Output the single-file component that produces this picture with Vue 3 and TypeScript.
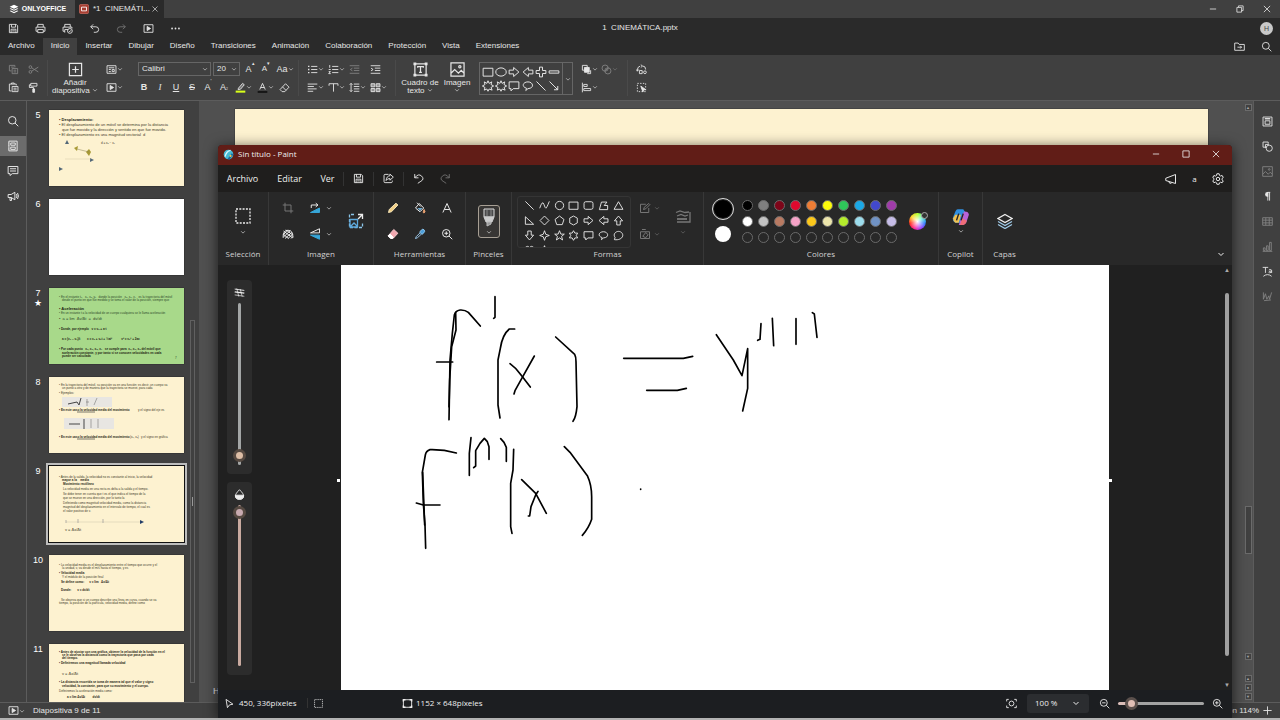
<script setup lang="ts">
import { h, ref } from 'vue'

const icons: Record<string, string> = {
  logo: '<g fill="currentColor" stroke="none"><path d="M8 1l7 3.2-7 3.2-7-3.2z"/><path d="M1 7.6l2-.9 5 2.3 5-2.3 2 .9-7 3.2z"/><path d="M1 11.2l2-.9 5 2.3 5-2.3 2 .9L8 14.6z"/></g>',
  slides: '<rect x="1" y="1" width="14" height="14" rx="1" fill="#a33a2e" stroke="#d06b5f"/><path d="M4 5h8v6H4z" stroke="#fff" stroke-width="1.4"/>',
  close: '<path d="M3 3l10 10M13 3L3 13"/>',
  min: '<path d="M3 8h10"/>',
  restore: '<path d="M3 5.5h7.500v7.500H3zM5.500 5V3H13v7.500h-2.500"/>',
  max: '<path d="M3 3h10v10H3z"/>',
  save: '<path d="M2 2h10l2 2v10H2zM5 2v4h6V2M4.500 14V9h7v5M6 11.500h4"/>',
  print: '<path d="M4 6V2h8v4M4 12H1.500V6h13v6H12M4 9.500h8V14H4z"/>',
  printq: '<path d="M4 6V2h8v4M4 12H1.500V6h13v2M4 14V9.500h5"/><circle cx="11.500" cy="11.500" r="3.500"/><path d="M10 11.500l1.200 1.200 2-2.200"/>',
  undo: '<path d="M6 2L2.500 5.500 6 9M2.500 5.500H10a4 4 0 010 8H7"/>',
  redo: '<path d="M10 2l3.500 3.500L10 9M13.500 5.500H6a4 4 0 000 8h3"/>',
  play: '<path d="M1.500 2.500h13v11h-13z"/><path d="M6 5l5 3-5 3z" fill="currentColor"/>',
  dots: '<g fill="currentColor" stroke="none"><circle cx="3" cy="8" r="1.300"/><circle cx="8" cy="8" r="1.300"/><circle cx="13" cy="8" r="1.300"/></g>',
  folder: '<path d="M1 3h5l1.500 2H15v8.500H1zM5 9h6M9 7l2 2-2 2"/>',
  search: '<circle cx="7" cy="7" r="5"/><path d="M10.700 10.700L15 15"/>',
  copy: '<path d="M10 5V2H2v8h3M4.500 4.500h4M6 6.500h8V14H6zM8 9h4M8 11.500h4"/>',
  cut: '<circle cx="3.500" cy="4.500" r="2"/><circle cx="3.500" cy="11.500" r="2"/><path d="M5.200 5.500L15 11.500M5.200 10.500L15 4.500"/>',
  paste: '<path d="M5 13H2V3h10v2M5 3V1.500h4V3M6 6.500h8.500V14H6zM8 9h4.500M8 11.500h4.500"/>',
  brush: '<path d="M4 2h9v4H4zM4 4H2v4h6v2"/><path d="M7 10h2.500v5H7z" fill="currentColor"/>',
  addslide: '<path d="M1.500 1.500h13v13h-13zM8 4.500v7M4.500 8h7"/>',
  layout: '<path d="M1.500 2.500h13v11h-13zM4 5.500h8M4 8h3M9 8h3v3H9zM4 11h3"/>',
  eraser: '<path d="M9.500 2.500l5 5-6 6.500h-4L1.500 11zM5 7l5 5"/>',
  bullets: '<path d="M6 3.500h9M6 8h9M6 12.500h9"/><path d="M1.500 3.500h2M1.500 8h2M1.500 12.500h2" stroke-width="2"/>',
  numbers: '<path d="M6 3.500h9M6 8h9M6 12.500h9M2.500 1.500v4M1 8h3M1 11h2.500l-2.500 3h3"/>',
  outdent: '<path d="M1 2.500h14M7 6h8M7 9.500h8M1 13.500h14M5 6L2 8l3 2"/>',
  indent: '<path d="M1 2.500h14M7 6h8M7 9.500h8M1 13.500h14M1.500 6l3 2-3 2"/>',
  alignl: '<path d="M1 3h14M1 6.500h9M1 10h13M1 13.500h8"/>',
  valign: '<path d="M1.500 5.500V2.500h13v3M8 2.500V14"/>',
  spacing: '<path d="M7 3h8M7 6.500h8M7 10h8M7 13.500h8M3 2v12M1 4l2-2 2 2M1 12l2 2 2-2"/>',
  columns: '<path d="M1.500 2.500h5.500v4.500H1.500zM9 2.500h5.500v4.500H9zM1.500 9.500h5.500V14H1.500zM9 9.500h5.500V14H9z" fill="currentColor" fill-opacity=".5"/>',
  textbox: '<path d="M2 2h12v12H2zM5 6V5h6v1M8 5v6M6.500 11h3"/><g fill="currentColor" stroke="none"><path d="M.5.500h3v3h-3zM12.500.500h3v3h-3zM.5 12.500h3v3h-3zM12.500 12.500h3v3h-3z"/></g>',
  image: '<path d="M1 1h14v14H1zM1 12l4-4 4 4 3-3 3 3"/><circle cx="10.500" cy="5" r="1.200"/>',
  front: '<path d="M2 2h7v7H2zM9 14h5V9"/><path d="M5 5h7v7H5z" fill="currentColor"/>',
  merge: '<circle cx="6" cy="6" r="4.500"/><circle cx="10" cy="10" r="4.500"/><path d="M6 10l4-4"/>',
  alignobj: '<path d="M2 1v14M4 3.500h5v3H4zM4 9.500h10v3H4z"/>',
  replace: '<path d="M6 3Q1.500 4 2 10M.5 8L2 10.500 4 8M7 1l2.500 2L7 5M10 3q4 0 4 5"/><path d="M5 9.500h4V14H5z"/><circle cx="13" cy="12" r="2"/>',
  selectall: '<path d="M2 2h12v12H2z" stroke-dasharray="2 2"/><path d="M7 6l7 5-3 .500-1 3z" fill="currentColor"/>',
  hl: '<path d="M5 9l6-7 2.500 2L8 10.500 4.500 11z" fill="currentColor" fill-opacity=".3"/><path d="M1 14h14" stroke="#d8ff1a" stroke-width="3"/>',
  fontcolor: '<path d="M4 11L8 2l4 9M5.500 8h5"/><path d="M1 14.500h14" stroke="#111" stroke-width="2.500"/>',
  slidepanel: '<path d="M2.500 1.500h11v13h-11zM5 4h6v3H5zM5 9.500h6v3H5zM2 4h1M2 7h1M2 12h1"/>',
  comment: '<path d="M1.500 2h13v9.500H7L4 14v-2.500H1.500zM4 5h8M4 8h8"/>',
  horn: '<path d="M1.500 6h4l5-3v10l-5-3h-4zM4 10v4h2v-4M12.500 5.500q1.800 2.500 0 5M14 4q2.500 4 0 8"/>',
  psettings: '<path d="M1.500 1.500h13v13h-13zM4.500 7h7v5h-7z"/><path d="M4 4h8" stroke-width="2"/>',
  pshape: '<path d="M6 9H1.500V1.500H9V4"/><path d="M5 10V5h5"/><circle cx="10.500" cy="10.500" r="4.500"/>',
  para: '<path d="M8.500 2v12M11 2v12M8 2h4"/><path d="M8 2.500a2.500 2.500 0 000 5z" fill="currentColor" stroke-width="2"/>',
  table: '<path d="M1 2.500h14v11H1zM1 6h14M1 10h14M5.500 2.500v11M10.500 2.500v11"/>',
  chart: '<path d="M2 10h2.500v4H2zM6.500 7H9v7H6.500zM11 2h2.500v12H11zM1 15.500h14"/>',
  textart: '<path d="M1 2h8M5 2v8M14 10V6q-3-2-4 0M14 7.500q-4-.5-4 1.500t4 0M2 15q6-5 12 0"/>',
  sign: '<path d="M2 2v10M2 12l3-8 2 8 3-5 1 5 3-10M3 14l10-1"/>',
  paint: '<circle cx="8" cy="8" r="7" fill="#45b8d4" stroke="none"/><path d="M3 11Q5 3 11 2" stroke="#d6f4ff" stroke-width="2"/><path d="M8 15l6-8" stroke="#176aa5" stroke-width="3"/><circle cx="11" cy="10" r="1.500" fill="#efc34d" stroke="none"/>',
  share: '<path d="M8 2H3q-1.500 0-1.500 1.500v9Q1.500 14 3 14h9q1.500 0 1.500-1.500V11"/><path d="M10 1.500L15 6l-5 4.500V8Q6 8 4.500 11 5 4.500 10 4z"/>',
  pundo: '<path d="M2.500 1.500v5.500h5.500M2.500 7Q8 0 12.500 4.500t-1 7.500L7 15"/>',
  predo: '<path d="M13.500 1.500v5.500H8M13.500 7Q8 0 3.500 4.500t1 7.500L9 15"/>',
  mega: '<path d="M1 7l13-5v12L1 10zM5 11.500q1 4 4 1.500"/>',
  gear: '<circle cx="8" cy="8" r="2.300"/><path d="M6.500 1h3l.5 2.200 1.300.8 2.200-.7L15 6l-1.700 1.500v1.500L15 10.500l-1.500 2.500-2.200-.7-1.300.8L9.500 15h-3L6 13l-1.300-.8-2.200.7L1 10.400l1.700-1.500V7.400L1 6l1.500-2.600 2.200.7L6 3.300z"/>',
  select: '<path d="M1 1h14v14H1z" stroke-dasharray="2 1.300" stroke-width="1.300"/>',
  crop: '<path d="M4 1v11h11M1 4h11v11"/>',
  rotate: '<path d="M2 14h12V8z" fill="#37a6d8" stroke="#37a6d8"/><path d="M3 8V4h8M9 1.500L12 4 9 6.500"/>',
  hatch: '<path d="M1.500 13Q1 3 8 3t6.500 10M2 9l5-6M2 12l9-8.500M4 14l9-8M8 14l6.500-6M12 14l2.500-2.500M2 4l12 9M1.500 8l7 6M5 2.500L14 9"/>',
  flip: '<path d="M2 6.500h12V1z"/><path d="M2 9.500h12V15z" fill="#37a6d8" stroke="#37a6d8"/>',
  resize: '<path d="M6 1.500H1.500V14.500H14.500V9" stroke="#8ac4e8" stroke-dasharray="3 1.500"/><path d="M10 1.500h4.500V6M14 2l-4 4"/><path d="M2 6.500h7.500V14H2zM2 14l4-4 4 4" stroke="#5ea9dc"/>',
  pencil: '<path d="M2 14l1-4 9-8.500 2.500 2.500L6 13z" fill="#f0cf86" stroke="#f7e5b8"/>',
  bucket: '<path d="M7 2l6 6-5 5-6-5zM4 1l5 5"/><path d="M4.500 8h7l-3.500 4z" fill="#6fa8cc" stroke="none"/><path d="M13.500 10q2.500 4 0 4.500t0-4.500" fill="#e9a272" stroke="#e9a272"/>',
  letterA: '<path d="M2.500 14L8 2l5.500 12M4.500 10h7"/>',
  perase: '<path d="M9 2l5.500 5L8 14H5L1.500 10.500z" fill="#f2a8b0" stroke="#f7c9ce"/><path d="M1.500 10.500L4 8l4.500 4.500L7 14H5z" fill="#fff" stroke="#fff"/>',
  dropper: '<path d="M10 2.500q2-2 3.500 0t0 3.500l-3 2.500-3-3z" fill="#4c9fdb" stroke="#8cc5ee"/><path d="M8 6.500L3 11.500 2 14l2.500-1L10 8" stroke="#9cc9ea"/>',
  zoomin: '<circle cx="7" cy="7" r="5"/><path d="M10.700 10.700L15 15M4.500 7h5M7 4.500v5"/>',
  zoomout: '<circle cx="7" cy="7" r="5"/><path d="M10.700 10.700L15 15M4.500 7h5"/>',
  fillout: '<path d="M13 8v6H2V3h7M6 10l1-3 6-5 1.500 1.500L9 9z"/>',
  fillin: '<path d="M2 5h12v9H2zM5 11l4-5 3 3-3 4zM4 2h5"/>',
  lines: '<path d="M1 4.500l4-1.500 5 1.500L14 4M15 4v10H2M2 8l4-1.500 4 1.500 3-1"/><path d="M2 11h10" stroke-width="1.8"/>',
  layers: '<path d="M8 1.500l7 4-7 4-7-4z"/><path d="M1 8.500l7 4 7-4M1 11.500l7 4 7-4" stroke="#9fc9e6"/>',
  copilot: '<path d="M5 1h5l2 3-3 9H3Q0 12 1 8l2-5Q4 1 5 1z" fill="#2f8fe0" stroke="none"/><path d="M3 6l-2 3q0 3 2 4h3l2-7z" fill="#f2c14e" stroke="none"/><path d="M11 3q4 0 4 3l-2 6q-1 3-4 3H6l3-9z" fill="#b863d8" stroke="none"/><path d="M9 9l-2 6h3q3-1 3-4z" fill="#ef6d78" stroke="none"/><path d="M6 5l-2 6M10 5L8 11" stroke="#262626"/>',
  cursor: '<path d="M3 2l10 7-5 1-3 4z"/>',
  sizeic: '<path d="M2 2.500h12v11H2z"/><path d="M2 5V2.500h3M11 2.500h3V5M14 11v2.500h-3M5 13.500H2V11" stroke-width="2"/>',
  fit: '<path d="M1 5V2h3M12 2h3v3M15 11v3h-3M4 14H1v-3"/><circle cx="8" cy="8" r="3.500"/>',
  drop: '<path d="M8 1Q2 7 2 10a6 5 0 0012 0Q14 7 8 1z"/><path d="M2 9h12q0 6-6 6T2 9z" fill="currentColor"/>',
  thick: '<path d="M1 3l14 2" /><path d="M1 7l14 2" stroke-width="2"/><path d="M1 11.500l14 2M4 2l3 12M9 3l3 11" stroke-width="1"/>',
  line: '<path d="M2 2l12 12"/>',
  arrowln: '<path d="M2 2l11 11M13 8v5H8"/>',
  curve: '<path d="M1 12Q5 0 7 6t3 6 5-10"/>',
  oval: '<ellipse cx="8" cy="8" rx="7" ry="5.500"/>',
  circle: '<circle cx="8" cy="8" r="6"/>',
  rect: '<path d="M1.500 3h13v10.500h-13z"/>',
  rrect: '<rect x="1.500" y="2.500" width="13" height="11" rx="2.500"/>',
  poly: '<path d="M2 14L5 3h8L9 8h5v6z"/>',
  tri: '<path d="M8 2.500L14.500 13.500h-13z"/>',
  rtri: '<path d="M2 2.500v11h12z"/>',
  diamond: '<path d="M8 1.500L14.500 8 8 14.500 1.500 8z"/>',
  penta: '<path d="M8 1.500l6.500 5-2.500 7.500H4L1.500 6.500z"/>',
  hexa: '<path d="M8 1.500l5.500 3v7L8 14.500l-5.500-3v-7z"/>',
  aright: '<path d="M1.500 5.500h6V2l7 6-7 6v-3.500h-6z"/>',
  aleft: '<path d="M14.500 5.500h-6V2l-7 6 7 6v-3.500h6z"/>',
  aup: '<path d="M5.500 14.500v-6H2l6-7 6 7h-3.500v6z"/>',
  adown: '<path d="M5.500 1.500v6H2l6 7 6-7h-3.500v-6z"/>',
  star4: '<path d="M8 1l1.800 5.200L15 8 9.800 9.800 8 15 6.200 9.800 1 8l5.200-1.800z"/>',
  star5: '<path d="M8 1l2 5h5l-4 3.300 1.500 5.200L8 11.500l-4.500 3L5 9.300 1 6h5z"/>',
  star6: '<path d="M8 1l2 3.500h4L12 8l2 3.500h-4L8 15l-2-3.500H2L4 8 2 4.500h4z"/>',
  callr: '<path d="M1.500 2.500h13v9H7L4 14.500v-3H1.500z"/>',
  callo: '<path d="M5 14l1-3C-1 9 1 2.500 8 2.500s9 8.500 0 9z"/>',
  callc: '<path d="M2 14l1-3C-.5 6 4 2 8 2s7 3.500 6 7-6 6-12 5z"/>',
  heart: '<path d="M8 14L2 7q-1-5 3-5 2 0 3 2 1-2 3-2 4 0 3 5z"/>',
  plus: '<path d="M6 1.500h4V6h4.500v4H10v4.500H6V10H1.500V6H6z"/>',
  minus: '<path d="M1.500 6.500h13v3h-13z"/>',
  burst: '<path d="M8 1l1.500 3.500L13 2.500 12 6l3.500 2L12 10l1.500 3.500L9.500 12 8 15l-1.500-3L3 13.500 4 10 .5 8 4 6 3 2.500l3.500 2z"/>',
  chev: '<path d="M3 6l5 5 5-5"/>',
}
const Icon = (p: { n: string }) =>
  h('svg', { viewBox: '0 0 16 16', class: 'ic', 'aria-hidden': 'true', innerHTML: icons[p.n] })
Icon.props = ['n']

const quick: [string, string][] = [['save', 'Guardar'], ['print', 'Imprimir'], ['printq', 'Impresión rápida'], ['undo', 'Deshacer'], ['redo', 'Rehacer'], ['play', 'Presentar'], ['dots', 'Más']]
const menus = ['Archivo', 'Inicio', 'Insertar', 'Dibujar', 'Diseño', 'Transiciones', 'Animación', 'Colaboración', 'Protección', 'Vista', 'Extensiones']
const officeShapes = ['rect', 'oval', 'aright', 'aleft', 'plus', 'minus', 'burst', 'burst', 'callr', 'callo', 'line', 'arrowln']
const paintShapes = ['line', 'curve', 'circle', 'rect', 'rrect', 'poly', 'tri', 'rtri', 'diamond', 'penta', 'hexa', 'aright', 'aleft', 'aup', 'adown', 'star4', 'star5', 'star6', 'callr', 'callo', 'callc', 'heart', 'star4']
const leftRail = ['search', 'slidepanel', 'comment', 'horn']
const rightRail: [string, boolean][] = [['psettings', true], ['pshape', true], ['image', false], ['para', true], ['table', false], ['chart', false], ['textart', true], ['sign', false]]
const tools = ['pencil', 'bucket', 'letterA', 'perase', 'dropper', 'zoomin']
const palette = ['#000000', '#7f7f7f', '#7d0519', '#e0092e', '#ee7d35', '#fdfb0b', '#2fc65a', '#1ba8e6', '#4248cd', '#a03caa', '#ffffff', '#c3c3c3', '#b97a62', '#f5a3c7', '#fcc81b', '#ece5ac', '#b5ec2c', '#9cdcec', '#7092c4', '#c6bde8', '', '', '', '', '', '', '', '', '', '']

type Line = [number, number, string, number?, boolean?]
interface Slide { n: number; kind: string; lines: Line[]; art?: string }
const slides: Slide[] = [
  { n: 5, kind: 'cream', lines: [
    [10, 11, '• Desplazamiento:', 4, true], [10, 16, '• El desplazamiento de un móvil se determina por la distancia', 4], [13, 21, 'que fue movido y la dirección y sentido en que fue movido.', 4], [10, 26, '• El desplazamiento es una magnitud vectorial  d', 4], [52, 34, 'd = x₂ − x₁', 3]],
    art: '<path d="M16 34l2-4 2 4zM10 57l4 2-4 2zM41 48l4 2-4 2z" fill="#536878"/><path d="M25 38l4-2-1 5zM37 42l3-3 2 3-2 4z" fill="#a89a35"/><path d="M28 39l12 3" stroke="#8a8352" stroke-width=".5"/><path d="M16 49h26" stroke="#c9c19f" stroke-width=".4"/>' },
  { n: 6, kind: 'blank', lines: [] },
  { n: 7, kind: 'green', lines: [
    [10, 10, '• En el instante t₁,   x₁, x₂, y₁   donde la posición   x₂, x₃, x₄   es la trayectoria del móvil', 3], [13, 13, 'desde el punto en que fue medido y se toma el valor de la posición, siempre que', 3],
    [10, 22, '• Aceleración', 4, true], [10, 26, '• En un instante t a la velocidad de un cuerpo cualquiera se le llama aceleración', 3], [10, 32, '•  a = lim  Δv/Δt  =  dv/dt', 4], [10, 42, '• Donde, por ejemplo   v = v₀ + a·t', 3, true], [13, 52, 'a = (v₂ − v₁)/t        x = x₀ + v₀t + ½at²           v² = v₀² + 2ax', 3, true],
    [10, 62, '• Por cada punto   x₁, x₂, x₃, x₄   se cumple para  x₁, x₂, x₃ del móvil que', 3, true], [13, 66, 'aceleración constante, y por tanto si se conocen velocidades en cada', 3, true], [13, 69, 'puede ser calculada', 3, true], [126, 71, '7', 3]] },
  { n: 8, kind: 'cream', lines: [
    [10, 9, '• En la trayectoria del móvil, su posición va en una función; es decir, un cuerpo va', 3], [13, 12, 'un punto a otro y de manera que la trayectoria se mueve, para cada', 3], [10, 17, '• Ejemplos:', 3], [10, 34, '• En este caso la velocidad media del movimiento', 3, true], [89, 34, 'y el signo del eje es', 3], [10, 61, '• En este caso la velocidad media del movimiento', 3, true], [81, 61, '(x₁, x₂)', 3], [92, 61, 'y el signo en gráfica', 3]],
    art: '<path d="M13 20h50v10H13zM15 41h50v11H15z" fill="#e8e6e2"/><path d="M19 27l9-2 2 3 2-7M20 47h11M35 42v10" stroke="#444" stroke-width="1" fill="none"/><path d="M38 22v7M37 25h3M48 21l-3 7M42 42v9M49 42v9" stroke="#777" stroke-width=".6"/><path d="M28 35h18M28 62h18" stroke="#222" stroke-width=".6"/>' },
  { n: 9, kind: 'cream', lines: [
    [10, 12, '• Antes de la salida, la velocidad no es constante al inicio, la velocidad', 3], [13, 15, 'mayor a la    media', 3, true], [14, 19, 'Movimiento rectilíneo', 3, true], [14, 24, 'La velocidad media en una recta es delta a la salida y el tiempo.', 3], [14, 29, 'Se debe tener en cuenta que t es el que indica el tiempo de la', 3], [14, 33, 'que se mueve en una dirección, por lo tanto la', 3], [14, 38, 'Definiendo como magnitud velocidad media, como la distancia', 3], [14, 42, 'magnitud del desplazamiento en el intervalo de tiempo, el cual es', 3], [14, 46, 'el valor positivo de v.', 3], [16, 65, 'v = Δx/Δt', 4]],
    art: '<path d="M17 56h76" stroke="#cfc7ae" stroke-width=".5"/><path d="M91 54l4 2-4 2z" fill="#233e68"/><path d="M17 54v3M29 53v4M54 53v4" stroke="#999" stroke-width=".7"/>' },
  { n: 10, kind: 'cream', lines: [
    [10, 11, '• La velocidad media es el desplazamiento entre el tiempo que ocurre y el', 3], [13, 14, 'la unidad, v, va desde el m/s hasta el tiempo, y es', 3], [10, 19, '• Velocidad media', 3, true], [13, 23, 'Y el módulo de la posición final', 3], [12, 28, 'Se define como:      v = lim   Δx/Δt', 3, true], [12, 36, 'Donde:       v = dx/dt', 3, true], [12, 46, 'Se observa que si un cuerpo describe una línea en curva, cuando se va', 3], [10, 49, 'tiempo, la posición de la partícula, velocidad media, define como', 3]] },
  { n: 11, kind: 'cream', lines: [
    [10, 9, '• Antes de ajustar con una gráfica, obtener la velocidad de la función en el', 3, true], [13, 12, 'se le observa la distancia como la trayectoria que pasa por cada', 3, true], [13, 15, 'del tiempo.', 3, true], [10, 20, '• Definiremos una magnitud llamada velocidad', 3, true], [13, 31, 'v = Δx/Δt', 4], [10, 39, '• La distancia recorrida se toma de manera tal que el valor y signo', 3, true], [13, 43, 'velocidad, la constante, para que su movimiento y el cuerpo.', 3, true], [10, 48, 'Definiremos la aceleración media como:', 3], [18, 54, 'a = lim Δv/Δt         dv/dt', 3, true]] },
]

const strokes = [
  'M241 138L205 97Q195 89 180 90Q166 92 163 105L157 160L150 240L147 419', 'M167 98L168 150L155 200L149 300L147 380', 'M110 246H158', 'M285 50V112L281 115',
  'M344 147H328C312 160 304 185 301 205L294 240V375L300 414', 'M330 251Q350 265 365 287L391 321', 'M403 228L370 287L345 332L342 342', 'M467 171L524 223Q528 230 528 245L531 380Q528 412 519 424',
  'M671 235H850L878 229', 'M740 331H832L859 325', 'M949 164L1000 240L1026 287L1043 206V325L1028 393', 'M1083 131L1080 178L1073 181', 'M1117 115L1121 197', 'M1188 116V193', 'M1237 98L1243 102L1251 172',
  'M169 519Q130 508 90 509Q78 513 76 525L67 577L70 670L75 735L77 805', 'M68 577L74 735', 'M49 669L70 675H120', 'M213 473L208 520V586', 'M221 563L227 558V512L240 490L253 475L262 485L267 500V538', 'M302 476L312 487L319 502V544',
  'M341 508L339 570L332 610V740L336 760', 'M365 599L407 640L439 700', 'M414 634L407 645L393 680L389 708H385', 'M493 500L510 517L562 587Q575 615 575 650V718Q566 745 547 766', 'M722 627v1',
]
const size = ref(2)
const opacity = ref(99)
const zoom = ref(9)
</script>

<template>
  <div class="office">
    <header class="titlebar">
      <button class="brand"><Icon n="logo" />ONLYOFFICE</button>
      <div class="doctab"><Icon n="slides" /><span>*1&nbsp; CINEMÁTI...</span><button aria-label="Cerrar pestaña"><Icon n="close" /></button></div>
      <div class="winbtns">
        <button aria-label="Minimizar"><Icon n="min" /></button>
        <button aria-label="Restaurar"><Icon n="restore" /></button>
        <button aria-label="Cerrar"><Icon n="close" /></button>
      </div>
    </header>
    <div class="quickrow">
      <div class="quick"><button v-for="q in quick" :key="q[0]" :class="{ off: q[0] === 'redo' }" :aria-label="q[1]"><Icon :n="q[0]" /></button></div>
      <h1>1&nbsp; CINEMÁTICA.pptx</h1>
      <div class="user"><span>H</span></div>
    </div>
    <nav class="menus">
      <button v-for="m in menus" :key="m" :class="{ on: m === 'Inicio' }">{{ m }}</button>
      <div class="menuright"><button aria-label="Abrir ubicación"><Icon n="folder" /></button><button aria-label="Buscar"><Icon n="search" /></button></div>
    </nav>

    <div class="ribbon">
      <div class="grp clip">
        <div class="row"><button class="off" aria-label="Copiar"><Icon n="copy" /></button><button class="off" aria-label="Cortar"><Icon n="cut" /></button></div>
        <div class="row"><button aria-label="Pegar"><Icon n="paste" /></button><button aria-label="Copiar estilo"><Icon n="brush" /></button></div>
      </div>
      <div class="big slidebtn"><button><Icon n="addslide" /><span>Añadir<br>diapositiva <Icon n="chev" class="car" /></span></button></div>
      <div class="grp mid">
        <div class="row"><button aria-label="Diseño de diapositiva"><Icon n="layout" /><Icon n="chev" class="car" /></button></div>
        <div class="row"><button aria-label="Iniciar presentación"><Icon n="play" /><Icon n="chev" class="car" /></button></div>
      </div>
      <div class="grp font">
        <div class="row">
          <label class="combo family"><select aria-label="Fuente"><option>Calibri</option></select><Icon n="chev" class="car" /></label>
          <label class="combo fsize"><select aria-label="Tamaño"><option>20</option></select><Icon n="chev" class="car" /></label>
          <button>A<sup>▴</sup></button><button class="sm">A<sup>▾</sup></button><button class="wide">Aa<Icon n="chev" class="car" /></button>
        </div>
        <div class="row fmt">
          <button><b>B</b></button><button class="it"><i>I</i></button><button><u>U</u></button><button><s>S</s></button><button>A<sup>ʹ</sup></button><button>A<sub>₂</sub></button>
          <button class="wide" aria-label="Resaltar"><Icon n="hl" /><Icon n="chev" class="car" /></button><button class="wide" aria-label="Color de fuente"><Icon n="fontcolor" /><Icon n="chev" class="car" /></button><button aria-label="Borrar estilo"><Icon n="eraser" /></button>
        </div>
      </div>
      <div class="grp para">
        <div class="row"><button aria-label="Viñetas"><Icon n="bullets" /><Icon n="chev" class="car" /></button><button aria-label="Numeración"><Icon n="numbers" /><Icon n="chev" class="car" /></button><button class="off" aria-label="Reducir sangría"><Icon n="outdent" /></button><button aria-label="Aumentar sangría"><Icon n="indent" /></button></div>
        <div class="row"><button aria-label="Alinear"><Icon n="alignl" /><Icon n="chev" class="car" /></button><button aria-label="Alineación vertical"><Icon n="valign" /><Icon n="chev" class="car" /></button><button aria-label="Interlineado"><Icon n="spacing" /><Icon n="chev" class="car" /></button><button aria-label="Columnas"><Icon n="columns" /><Icon n="chev" class="car" /></button></div>
      </div>
      <div class="big"><button><Icon n="textbox" /><span>Cuadro de<br>texto <Icon n="chev" class="car" /></span></button></div>
      <div class="big img"><button><Icon n="image" /><span>Imagen<br><Icon n="chev" class="car" /></span></button></div>
      <div class="gallery">
        <div class="shapes"><button v-for="(s, i) in officeShapes" :key="i" aria-label="Forma"><Icon :n="s" /></button></div>
        <button class="more" aria-label="Más formas"><Icon n="chev" class="car" /></button>
      </div>
      <div class="grp arrange">
        <div class="row"><button aria-label="Organizar"><Icon n="front" /><Icon n="chev" class="car" /></button><button class="off" aria-label="Combinar"><Icon n="merge" /><Icon n="chev" class="car" /></button></div>
        <div class="row"><button aria-label="Alinear objetos"><Icon n="alignobj" /><Icon n="chev" class="car" /></button></div>
      </div>
      <div class="grp last">
        <div class="row"><button aria-label="Reemplazar"><Icon n="replace" /></button></div>
        <div class="row"><button aria-label="Seleccionar todo"><Icon n="selectall" /></button></div>
      </div>
    </div>

    <main class="body">
      <aside class="rail"><button v-for="r in leftRail" :key="r" :class="{ on: r === 'slidepanel' }" :aria-label="r"><Icon :n="r" /></button></aside>
      <section class="thumbs">
        <ol>
          <li v-for="s in slides" :key="s.n">
            <div class="num">{{ s.n }}<span v-if="s.n === 7" class="star">★</span></div>
            <div :class="['thumb', s.kind, { sel: s.n === 9 }]">
              <svg viewBox="0 0 135 76">
                <g v-html="s.art" />
                <text v-for="(l, i) in s.lines" :key="i" :x="l[0]" :y="l[1]" :font-size="l[3]" :class="{ strong: l[4] }">{{ l[2] }}</text>
              </svg>
            </div>
          </li>
        </ol>
        <div class="tscroll"><span></span></div>
      </section>
      <section class="editor"><div class="slide"></div><p class="notes">H</p></section>
      <div class="vscroll"><span class="arr">▲</span><div class="lane"><i></i></div><span class="arr">▼</span><span class="arr gap">▲</span><span class="arr">●</span><span class="arr">▼</span></div>
      <aside class="rail right"><button v-for="r in rightRail" :key="r[0]" :class="{ off: !r[1] }" :aria-label="r[0]"><Icon :n="r[0]" /></button></aside>
    </main>
    <footer class="status"><button aria-label="Presentar"><Icon n="play" /><Icon n="chev" class="car" /></button><span>Diapositiva 9 de 11</span><span class="z">Ampliación 114%</span><button class="pl" aria-label="Acercar"><svg viewBox="0 0 16 16" class="ic"><path d="M8 2v12M2 8h12" /></svg></button></footer>

    <section class="paint">
      <header class="ptitle"><Icon n="paint" /><h2>Sin título - Paint</h2>
        <div class="pwin"><button aria-label="Minimizar"><Icon n="min" /></button><button aria-label="Maximizar"><Icon n="max" /></button><button aria-label="Cerrar"><Icon n="close" /></button></div>
      </header>
      <nav class="pmenu">
        <button class="m1">Archivo</button><button class="m2">Editar</button><button class="m3">Ver</button>
        <button class="cmd" aria-label="Guardar"><Icon n="save" /></button><button class="cmd" aria-label="Compartir"><Icon n="share" /></button>
        <button class="cmd" aria-label="Deshacer"><Icon n="pundo" /></button><button class="cmd2 off" aria-label="Rehacer"><Icon n="predo" /></button>
        <div class="pmr"><button aria-label="Comentarios"><Icon n="mega" /></button><button class="avatar">a</button><button aria-label="Configuración"><Icon n="gear" /></button></div>
      </nav>
      <div class="pribbon">
        <div class="pg selg"><div class="pc col"><button aria-label="Seleccionar"><Icon n="select" class="i16" /><Icon n="chev" class="car" /></button></div><span>Selección</span></div>
        <div class="pg imgg"><div class="pc">
          <div class="igrid">
            <button class="off" aria-label="Recortar"><Icon n="crop" /></button><button aria-label="Girar"><Icon n="rotate" /><Icon n="chev" class="car" /></button>
            <button aria-label="Quitar fondo"><Icon n="hatch" /></button><button aria-label="Voltear"><Icon n="flip" /><Icon n="chev" class="car" /></button>
          </div>
          <button aria-label="Cambiar tamaño"><Icon n="resize" class="i16" /></button>
        </div><span>Imagen</span></div>
        <div class="pg toolg"><div class="pc"><div class="tgrid"><button v-for="t in tools" :key="t" :aria-label="t"><Icon :n="t" /></button></div></div><span>Herramientas</span></div>
        <div class="pg brushg"><div class="pc"><button class="brushbtn" aria-label="Pinceles"><svg viewBox="0 0 16 20" class="bic"><path d="M3 1h10v8H3z" fill="#4a4a4a" stroke="#ddd" /><path d="M3 9h10l-2 5H5z" fill="#ccc" stroke="#ccc" /><path d="M6 14h4v2l-4 2z" fill="#999" stroke="#bbb" /><path d="M6 2v6M10 2v6" stroke="#888" /></svg><Icon n="chev" class="car" /></button></div><span>Pinceles</span></div>
        <div class="pg shapeg"><div class="pc">
          <div class="pshapes"><button v-for="(s, i) in paintShapes" :key="i" aria-label="Forma"><Icon :n="s" /></button></div>
          <div class="opts off"><button aria-label="Contorno"><Icon n="fillout" /><Icon n="chev" class="car" /></button><button aria-label="Relleno"><Icon n="fillin" /><Icon n="chev" class="car" /></button></div>
          <button class="thick off" aria-label="Tamaño"><Icon n="lines" class="i16" /><Icon n="chev" class="car" /></button>
        </div><span>Formas</span></div>
        <div class="pg colorg"><div class="pc">
          <div class="cur"><button class="c1" aria-label="Color 1"></button><button class="c2" aria-label="Color 2"></button></div>
          <div class="pal"><button v-for="(c, i) in palette" :key="i" :style="{ background: c || 'none' }" :aria-label="c || 'Vacío'"></button></div>
          <button class="wheel" aria-label="Editar colores"><i></i></button>
        </div><span>Colores</span></div>
        <div class="pg cop"><div class="pc"><button aria-label="Copilot"><Icon n="copilot" class="i18" /><Icon n="chev" class="car" /></button></div><span>Copilot</span></div>
        <div class="pg lay"><div class="pc"><button aria-label="Capas"><Icon n="layers" class="i16" /></button></div><span>Capas</span></div>
        <button class="collapse" aria-label="Contraer"><Icon n="chev" class="i8" /></button>
      </div>
      <div class="stage">
        <div class="sliders">
          <label class="sl"><Icon n="thick" /><input v-model="size" type="range" class="vr" aria-label="Tamaño"></label>
          <label class="sl"><Icon n="drop" /><input v-model="opacity" type="range" class="vr warm" aria-label="Opacidad"></label>
        </div>
        <div class="paper"><i class="hd l"></i><i class="hd r"></i>
          <svg viewBox="0 0 768 424" preserveAspectRatio="xMinYMin meet"><g transform="translate(59 15) scale(.33333)"><path v-for="(d, i) in strokes" :key="i" :d="d" /></g></svg>
        </div>
        <div class="pscroll"><span>▲</span><i></i><span>▼</span></div>
      </div>
      <footer class="pstatus">
        <Icon n="cursor" /><span class="pos">450, 336píxeles</span><Icon n="select" class="selic" /><Icon n="sizeic" /><span class="dim">1152 × 648píxeles</span>
        <div class="pz"><button aria-label="Ajustar"><Icon n="fit" /></button>
          <label class="zsel"><select aria-label="Zoom"><option>100 %</option></select><Icon n="chev" class="i8" /></label>
          <button aria-label="Alejar"><Icon n="zoomout" /></button><input v-model="zoom" type="range" class="zr" aria-label="Nivel de zoom"><button aria-label="Acercar"><Icon n="zoomin" /></button></div>
      </footer>
    </section>
  </div>
</template>

<style>
html, body { background: #404040; }
</style>

<style scoped>
* { box-sizing: border-box; }
.office { position: relative; display: flex; flex-direction: column; height: 100vh; overflow: hidden; background: #404040; color: #e6e6e6; font: 8px/10px "Liberation Sans", Arial, sans-serif; border-bottom: 2px solid #b3b3b3; }
button, select, input { font: inherit; color: inherit; background: none; border: 0; margin: 0; padding: 0; }
button { display: flex; align-items: center; justify-content: center; }
h1, h2, p, ol { margin: 0; padding: 0; font-size: inherit; font-weight: normal; list-style: none; }
.ic { width: 12px; height: 12px; flex: none; fill: none; stroke: currentColor; stroke-width: 1.3; }
.ic.car { width: 6px; height: 6px; stroke-width: 2; opacity: .8; }
.ic.i8 { width: 8px; height: 8px; stroke-width: 2; }
.ic.i16 { width: 16px; height: 16px; }
.ic.i18 { width: 18px; height: 18px; }
.off { opacity: .4; }

.titlebar { display: flex; height: 18px; flex: none; background: #404040; }
.brand { width: 75px; gap: 3px; background: #4a4a4a; color: #fff; font-size: 7px; font-weight: bold; }
.brand .ic { width: 10px; height: 10px; }
.doctab { display: flex; align-items: center; width: 89px; padding: 0 5px 0 4px; background: #2a2a2a; }
.doctab .ic { width: 10px; height: 10px; }
.doctab span { flex: 1; padding-left: 4px; white-space: nowrap; }
.doctab button .ic { width: 8px; height: 8px; }
.winbtns { display: flex; margin-left: auto; }
.winbtns button { width: 27px; }
.winbtns .ic { width: 10px; height: 10px; }
.quickrow { display: grid; grid-template-columns: 1fr auto 1fr; align-items: center; height: 20px; flex: none; background: #2a2a2a; }
.quick { display: flex; }
.quick button { width: 27px; height: 20px; }
.quick .ic { width: 11px; height: 11px; }
.user { display: flex; justify-content: flex-end; padding-right: 7px; }
.user span { width: 13px; height: 13px; border-radius: 50%; background: #c9c9c9; color: #444; text-align: center; font-size: 7px; line-height: 13px; }
.menus { display: flex; height: 17px; flex: none; background: #2a2a2a; }
.menus > button { padding: 0 8px 2px; }
.menus > .on { background: #404040; }
.menuright { display: flex; margin-left: auto; }
.menuright button { width: 27px; }
.menuright .ic { width: 11px; height: 11px; }

.ribbon { display: flex; height: 45px; flex: none; padding: 5px 0 4px; background: #404040; }
.grp { display: flex; flex-direction: column; flex: none; }
.row { display: flex; align-items: center; height: 18px; }
.ribbon .ic:not(.car) { width: 11px; height: 11px; }
.clip { width: 48px; padding-left: 3px; border-right: 1px solid #4a4a4a; }
.clip button { width: 20px; }
.big { flex: none; width: 42px; }
.big button { flex-direction: column; width: 100%; padding-top: 2px; line-height: 8px; }
.ribbon .big .ic:not(.car) { width: 15px; height: 15px; margin-bottom: 2px; }
.big.slidebtn { margin: 0 10px 0 6px; }
.big.slidebtn button { white-space: nowrap; }
.big.img { width: 32px; }
.mid { width: 32px; }
.font { width: 161px; border-right: 1px solid #4a4a4a; }
.combo { display: flex; align-items: center; height: 14px; border: 1px solid #666; margin-right: 2px; padding-right: 2px; }
select { appearance: none; flex: 1; min-width: 0; padding-left: 3px; }
.family { width: 73px; }
.fsize { width: 27px; }
.font button { width: 16px; height: 16px; font-size: 9px; white-space: nowrap; }
.font button.sm { font-size: 8px; }
.font button.it { font-family: "Liberation Serif", serif; }
.font button.wide { width: 22px; }
.font sup, .font sub { font-size: 5px; line-height: 5px; }
.font sup { align-self: flex-start; }
.fmt { margin-left: -2px; }
.para { width: 97px; padding-left: 8px; border-right: 1px solid #4a4a4a; margin-right: 3px; }
.para button { width: 21px; justify-content: flex-start; }
.gallery { display: flex; width: 94px; height: 33px; margin: 2px 8px 0 6px; border: 1px solid #666; }
.shapes { display: grid; grid-template-columns: repeat(6, 1fr); align-content: center; flex: 1; padding: 0 1px; border-right: 1px solid #666; }
.shapes button { height: 14px; }
.ribbon .shapes .ic { width: 12px; height: 12px; }
.more { width: 9px; }
.arrange { width: 47px; border-right: 1px solid #4a4a4a; }
.arrange button { width: 20px; justify-content: flex-start; }
.last button { width: 26px; }

.body { display: flex; flex: 1; min-height: 0; border-top: 1px solid #5c5c5c; }
.rail { width: 27px; flex: none; padding-top: 10px; border-right: 1px solid #5c5c5c; }
.rail button { width: 100%; height: 20px; margin-bottom: 5px; }
.rail .on { background: #6c6c6c; }
.rail.right { border: 0; border-left: 1px solid #5c5c5c; }
.rail.right .ic { width: 11px; height: 11px; }
.thumbs { display: flex; flex: none; width: 172px; overflow: hidden; }
.thumbs ol { display: flex; flex-direction: column; gap: 13px; flex: none; width: 157px; padding-top: 9px; }
li { display: flex; }
.num { display: flex; flex-direction: column; align-items: center; width: 22px; font-size: 9px; color: #fff; }
.star { font-size: 9px; }
.thumb { width: 135px; height: 76px; box-shadow: 0 0 1px #111; overflow: hidden; }
.thumb svg { display: block; width: 100%; height: 100%; }
.thumb text { fill: #3d3a29; font-family: "Liberation Sans", Arial, sans-serif; white-space: pre; }
.thumb text.strong { fill: #1f1d13; font-weight: bold; }
.cream { background: #fdf2d0; }
.blank { background: #fff; }
.green { background: #a8d98a; }
.green text { fill: #2f4a2a; }
.sel { outline: 2px solid #bdbdbd; outline-offset: 1px; box-shadow: 0 0 0 1px #111; }
.tscroll { display: flex; align-items: center; justify-content: center; width: 5px; margin: 219px 0 19px 6px; border: 1px solid #606060; }
.tscroll span { width: 1px; height: 9px; background: #999; }
.editor { position: relative; display: flex; flex-direction: column; flex: 1; padding: 8px 35px 0 36px; background: #505050; }
.slide { height: 500px; background: #fdf2d0; box-shadow: 0 0 1px #111; }
.notes { position: absolute; left: 14px; bottom: 6px; font-size: 9px; }
.vscroll { display: flex; flex-direction: column; align-items: center; flex: none; width: 10px; padding: 2px 0 1px; background: #505050; }
.arr { width: 7px; height: 7px; margin: 1px 0; border: 1px solid #6b6b6b; background: #404040; color: #aaa; font-size: 4px; line-height: 5px; text-align: center; }
.arr.gap { margin-top: 14px; }
.lane { display: flex; flex-direction: column; flex: 1; justify-content: flex-end; }
.lane i { width: 7px; height: 48px; margin-bottom: 98px; border: 1px solid #6b6b6b; background: #404040; }
.status { display: flex; align-items: center; height: 16px; flex: none; padding: 0 7px; border-top: 1px solid #5c5c5c; }
.status > button:first-child { width: 19px; }
.status .ic:not(.car) { width: 11px; height: 11px; }
.status span { padding-left: 7px; }
.status .z { margin-left: auto; padding-right: 3px; }

.paint { position: absolute; top: 145px; left: 218px; right: 48px; bottom: 0; display: flex; flex-direction: column; background: #202020; color: #eee; border-radius: 4px 4px 0 0; box-shadow: 0 2px 14px #000a; font-family: "Open Sans", "Noto Sans", sans-serif; overflow: hidden; }
.ptitle { display: flex; align-items: center; height: 20px; flex: none; padding: 0 1px 2px 5px; background: #611d17; }
.ptitle .ic { width: 11px; height: 11px; }
.ptitle h2 { padding-left: 4px; }
.pwin { display: flex; margin-left: auto; }
.pwin button { width: 30px; height: 18px; }
.pwin .ic { width: 10px; height: 10px; }
.pmenu { display: flex; align-items: center; height: 27px; flex: none; background: #1f1e1d; font-size: 9px; }
.m1 { width: 49px; }
.m2 { width: 45px; }
.m3 { width: 31px; }
.cmd { width: 30px; height: 14px; border-left: 1px solid #333; }
.cmd2 { width: 24px; }
.pmenu .cmd .ic, .pmenu .cmd2 .ic { width: 11px; height: 11px; }
.pmr { display: flex; margin-left: auto; padding-right: 3px; }
.pmr button { width: 22px; }
.pmr .avatar { width: 25px; font-size: 8px; }
.pribbon { display: flex; height: 73px; flex: none; background: #282828; }
.pg { display: flex; flex-direction: column; align-items: center; flex: none; border-right: 1px solid #383838; }
.pg > span { height: 17px; line-height: 11px; color: #d2d2d2; }
.pc { display: flex; align-items: center; justify-content: center; flex: 1; width: 100%; min-height: 0; padding-top: 2px; }
.selg { width: 51px; }
.selg button, .cop button, .thick { flex-direction: column; gap: 5px; }
.imgg { width: 105px; }
.igrid { display: grid; grid-template-columns: 27px 37px; row-gap: 12px; margin: 0 9px 0 -4px; }
.igrid button { gap: 5px; height: 14px; }
.toolg { width: 92px; }
.tgrid { display: grid; grid-template-columns: repeat(3, 27px); row-gap: 12px; }
.tgrid button { height: 14px; }
.brushg { width: 46px; }
.brushbtn { flex-direction: column; width: 22px; height: 33px; gap: 1px; border: 1px solid #a79f94; border-radius: 3px; background: #383634; }
.bic { width: 16px; height: 20px; fill: none; }
.shapeg { width: 192px; }
.shapeg .pc { justify-content: flex-start; padding-left: 5px; }
.pshapes { display: grid; grid-template-columns: repeat(7, 1fr); grid-auto-rows: 15px; flex: none; width: 114px; height: 52px; margin-top: 1px; padding: 1px 4px 0; border: 1px solid #353535; border-radius: 3px; overflow: hidden; }
.pshapes .ic { width: 11px; height: 11px; }
.opts { display: flex; flex-direction: column; gap: 13px; margin-left: 8px; }
.opts button { gap: 3px; height: 13px; }
.thick { margin-left: 15px; }
.colorg { width: 235px; }
.colorg .pc { justify-content: flex-start; padding-left: 8px; }
.cur { display: flex; flex-direction: column; align-items: center; gap: 8px; width: 22px; margin-right: 5px; }
.c1 { width: 18px; height: 18px; border-radius: 50%; background: #000; outline: 1px solid #ddd; outline-offset: 1px; }
.c2 { width: 16px; height: 16px; border-radius: 50%; background: #fff; }
.pal { display: grid; grid-template-columns: repeat(10, 16px); grid-auto-rows: 16px; align-items: center; justify-items: center; margin-right: 10px; }
.pal button { width: 11px; height: 11px; border: 1px solid #6a6a6a; border-radius: 50%; }
.wheel { position: relative; width: 17px; height: 17px; border-radius: 50%; background: radial-gradient(#fff, transparent 65%), conic-gradient(#b6ff2c, #46f0c0, #2d7dff, #a13cff, #ff2890, #ff3020, #ffd42c, #b6ff2c); }
.wheel i { position: absolute; top: -1px; right: -2px; width: 7px; height: 7px; border: 1px solid #aaa; border-radius: 50%; background: #333; }
.cop { width: 44px; }
.cop button { gap: 2px; }
.lay { width: 43px; border: 0; }
.collapse { align-self: flex-end; margin: 0 7px 7px auto; }
.stage { display: flex; flex: 1; min-height: 0; }
.sliders { display: flex; flex-direction: column; gap: 8px; width: 123px; flex: none; padding: 15px 0 15px 9px; }
.sl { display: flex; flex-direction: column; align-items: center; gap: 5px; flex: 1; width: 25px; min-height: 0; padding: 7px 0 9px; border-radius: 4px; background: #2c2c2c; }
.sl .ic { width: 11px; height: 11px; }
.vr { appearance: none; writing-mode: vertical-lr; direction: rtl; width: 14px; flex: 1; min-height: 0; }
.vr::-webkit-slider-runnable-track { width: 3px; border-radius: 2px; background: #a3a6a6; }
.vr.warm::-webkit-slider-runnable-track { background: #c9aaa0; }
.vr::-webkit-slider-thumb { appearance: none; width: 13px; height: 13px; margin-left: -5px; border: 3px solid #554941; border-radius: 50%; background: #dcbda5; }
.vr.warm::-webkit-slider-thumb { background: #c8aab0; }
.paper { position: relative; flex: 1; min-width: 0; background: #fff; }
.paper svg { display: block; width: 100%; height: 100%; }
.paper path { fill: none; stroke: #000; stroke-width: 5; stroke-linecap: round; stroke-linejoin: round; }
.hd { position: absolute; top: 50%; width: 3px; height: 3px; margin-top: 1px; background: #fff; }
.hd.l { left: -4px; }
.hd.r { right: -3px; }
.pscroll { display: flex; flex-direction: column; align-items: center; width: 10px; flex: none; margin-left: 113px; color: #aaa; font-size: 6px; }
.pscroll i { flex: 1; width: 4px; margin: 18px 0 24px; border-radius: 2px; background: #a0a0a0; }
.pstatus { display: flex; align-items: center; height: 28px; flex: none; padding: 0 9px 2px 6px; background: #1c1e21; }
.pstatus .ic { width: 11px; height: 11px; }
.pos { width: 73px; padding-left: 4px; border-right: 1px solid #333; }
.pstatus .selic { width: 9px; height: 9px; margin: 0 79px 0 6px; }
.dim { padding-left: 3px; }
.pz { display: flex; align-items: center; margin-left: auto; }
.zsel { display: flex; align-items: center; width: 62px; height: 19px; margin: 0 10px; padding: 0 9px 0 5px; border-radius: 3px; background: #2b2d30; }
.zsel .ic { width: 8px; height: 8px; }
.zr { appearance: none; width: 86px; height: 14px; margin: 0 8px; }
.zr::-webkit-slider-runnable-track { height: 3px; border-radius: 2px; background: linear-gradient(90deg, #d9bdb8 14%, #a3a3a3 14%); }
.zr::-webkit-slider-thumb { appearance: none; width: 13px; height: 13px; margin-top: -5px; border: 3px solid #5b504c; border-radius: 50%; background: #e0beb5; }
</style>
